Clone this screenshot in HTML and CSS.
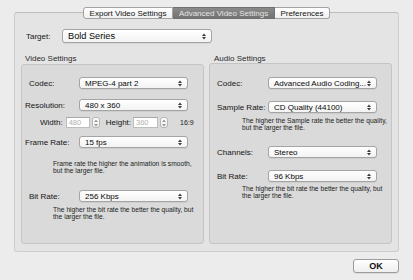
FILE: index.html
```html
<!DOCTYPE html>
<html>
<head>
<meta charset="utf-8">
<link rel="stylesheet" href="styles.css">
</head>
<body>
<div class="window">
  <div class="tabs">
    <div class="tab t1">Export Video Settings</div>
    <div class="tab t2 sel">Advanced Video Settings</div>
    <div class="tab t3">Preferences</div>
  </div>
  <div class="panel">
    <div class="target-row">
      <span class="tlabel">Target:</span>
      <div class="popup big"><span>Bold Series</span><svg class="arr" width="4" height="7" viewBox="0 0 4 7"><polygon points="0,3 2,0.5 4,3"/><polygon points="0,4 2,6.5 4,4"/></svg></div>
    </div>
    <div class="groups">
      <div class="group video">
        <div class="gtitle">Video Settings</div>
        <div class="gbox">
          <div class="row r-codec"><span class="lbl ind">Codec:</span><div class="popup"><span>MPEG-4 part 2</span><svg class="arr" width="4" height="7" viewBox="0 0 4 7"><polygon points="0,3 2,0.5 4,3"/><polygon points="0,4 2,6.5 4,4"/></svg></div></div>
          <div class="row r-res"><span class="lbl">Resolution:</span><div class="popup"><span>480 x 360</span><svg class="arr" width="4" height="7" viewBox="0 0 4 7"><polygon points="0,3 2,0.5 4,3"/><polygon points="0,4 2,6.5 4,4"/></svg></div></div>
          <div class="size-row">
            <span class="slbl wl">Width:</span>
            <div class="field fw">480</div>
            <div class="stepper"><svg width="4" height="8" viewBox="0 0 4 8"><polygon points="0,3 2,0.5 4,3"/><polygon points="0,5 2,7.5 4,5"/></svg></div>
            <span class="slbl hl">Height:</span>
            <div class="field fh">360</div>
            <div class="stepper"><svg width="4" height="8" viewBox="0 0 4 8"><polygon points="0,3 2,0.5 4,3"/><polygon points="0,5 2,7.5 4,5"/></svg></div>
            <span class="ratio">16:9</span>
          </div>
          <div class="row r-fr"><span class="lbl">Frame Rate:</span><div class="popup"><span>15 fps</span><svg class="arr" width="4" height="7" viewBox="0 0 4 7"><polygon points="0,3 2,0.5 4,3"/><polygon points="0,4 2,6.5 4,4"/></svg></div></div>
          <p class="help h-fr">Frame rate the higher the animation is smooth,<br>but the larger file.</p>
          <div class="row r-vbr"><span class="lbl ind">Bit Rate:</span><div class="popup"><span>256 Kbps</span><svg class="arr" width="4" height="7" viewBox="0 0 4 7"><polygon points="0,3 2,0.5 4,3"/><polygon points="0,4 2,6.5 4,4"/></svg></div></div>
          <p class="help h-vbr">The higher the bit rate the better the quality, but<br>the larger the file.</p>
        </div>
      </div>
      <div class="group audio">
        <div class="gtitle">Audio Settings</div>
        <div class="gbox">
          <div class="row r-acodec"><span class="lbl">Codec:</span><div class="popup"><span>Advanced Audio Coding...</span><svg class="arr" width="4" height="7" viewBox="0 0 4 7"><polygon points="0,3 2,0.5 4,3"/><polygon points="0,4 2,6.5 4,4"/></svg></div></div>
          <div class="row r-sr"><span class="lbl">Sample Rate:</span><div class="popup"><span>CD Quality (44100)</span><svg class="arr" width="4" height="7" viewBox="0 0 4 7"><polygon points="0,3 2,0.5 4,3"/><polygon points="0,4 2,6.5 4,4"/></svg></div></div>
          <p class="help h-sr">The higher the Sample rate the better the quality,<br>but the larger the file.</p>
          <div class="row r-ch"><span class="lbl">Channels:</span><div class="popup"><span>Stereo</span><svg class="arr" width="4" height="7" viewBox="0 0 4 7"><polygon points="0,3 2,0.5 4,3"/><polygon points="0,4 2,6.5 4,4"/></svg></div></div>
          <div class="row r-abr"><span class="lbl">Bit Rate:</span><div class="popup"><span>96 Kbps</span><svg class="arr" width="4" height="7" viewBox="0 0 4 7"><polygon points="0,3 2,0.5 4,3"/><polygon points="0,4 2,6.5 4,4"/></svg></div></div>
          <p class="help h-abr">The higher the bit rate the better the quality, but<br>the larger the file.</p>
        </div>
      </div>
    </div>
  </div>
  <div class="footer">
    <div class="okbtn">OK</div>
  </div>
</div>
</body>
</html>
```

FILE: styles.css
```css
* { box-sizing: border-box; }
html, body { margin: 0; padding: 0; }
body {
  width: 413px;
  height: 280px;
  overflow: hidden;
  background: #ececec;
  font-family: "Liberation Sans", Arial, sans-serif;
  font-size: 8px;
  color: #141414;
}
.window { display: flex; flex-direction: column; }

.tabs {
  display: flex;
  justify-content: center;
  height: 12px;
  margin: 7px 0 -7px 0;
  position: relative;
  z-index: 1;
}
.tab {
  height: 12px;
  display: flex;
  align-items: center;
  justify-content: center;
  font-size: 8px;
  color: #111;
  background: linear-gradient(#ffffff, #f0f0f0);
  border: 1px solid #a2a2a2;
  border-left: none;
}
.t1 { width: 90px; border-left: 1px solid #a2a2a2; border-radius: 3px 0 0 3px; }
.t2 { width: 102px; }
.t3 { width: 55px; border-radius: 0 3px 3px 0; }
.tab.sel {
  background: linear-gradient(#8a8a8a, #727272);
  color: #e6e6e6;
  border-color: #707070;
}

.panel {
  margin: 0 14px;
  height: 240px;
  background: #e4e4e4;
  border: 1px solid #cdcdcd;
  border-top-color: #bcbcbc;
  border-radius: 3px;
  padding: 0 6px 7px;
  display: flex;
  flex-direction: column;
}
.target-row {
  display: flex;
  align-items: center;
  margin: 16px 0 0 5px;
  height: 14px;
}
.tlabel { width: 36px; font-size: 8px; }

.popup {
  display: flex;
  align-items: center;
  justify-content: space-between;
  height: 12px;
  width: 109px;
  border: 1px solid #a4a4a4;
  border-radius: 3px;
  background: linear-gradient(#ffffff, #f3f3f3);
  box-shadow: 0 1px 0 rgba(0,0,0,0.06);
  padding: 0 5px 0 5px;
  font-size: 8px;
  color: #0a0a0a;
  white-space: nowrap;
}
.popup.big {
  width: 150px;
  height: 14px;
  font-size: 9.2px;
  padding: 0 5px 0 5px;
}
.arr { fill: #3a3a3a; flex: none; }

.groups {
  display: flex;
  gap: 5px;
  margin-top: 11px;
}
.group { width: 183px; display: flex; flex-direction: column; }
.gtitle {
  height: 10px;
  line-height: 10px;
  padding-left: 4px;
  font-size: 8px;
  color: #2a2a2a;
}
.audio .gtitle { padding-left: 5px; height: 9px; line-height: 9px; }
.gbox {
  height: 180px;
  background: #dadada;
  border: 1px solid #c5c5c5;
  border-radius: 3px;
  display: flex;
  flex-direction: column;
}
.audio .gbox { height: 181px; }
.video .gbox { padding-left: 3px; }
.audio .gbox { padding-left: 7px; }

.row { display: flex; align-items: center; height: 12px; }
.lbl { font-size: 8px; color: #141414; white-space: nowrap; }
.video .lbl { width: 54px; }
.video .lbl.ind { padding-left: 4px; }
.audio .lbl { width: 51px; }

.r-codec { margin-top: 12px; }
.r-res { margin-top: 10px; }
.size-row {
  display: flex;
  align-items: center;
  height: 11px;
  margin-top: 6px;
}
.slbl { font-size: 8px; color: #141414; }
.wl { margin-left: 15px; }
.hl { margin-left: 6px; }
.field {
  height: 11px;
  background: #fff;
  border: 1px solid #bdbdbd;
  border-top-color: #a9a9a9;
  color: #b0b0b0;
  font-size: 7.5px;
  display: flex;
  align-items: center;
  padding-left: 2px;
}
.fw { width: 24px; margin-left: 3px; }
.fh { width: 25px; margin-left: 2px; }
.stepper {
  width: 8px;
  height: 11px;
  margin-left: 2px;
  border: 1px solid #b5b5b5;
  border-radius: 3px;
  background: linear-gradient(#ffffff, #f0f0f0);
  display: flex;
  align-items: center;
  justify-content: center;
}
.stepper svg { fill: #999; }
.ratio { margin-left: 12px; font-size: 7px; color: #222; }
.r-fr { margin-top: 8px; }
.help {
  margin: 0;
  font-size: 6.7px;
  line-height: 7px;
  color: #222;
  white-space: nowrap;
}
.video .help { padding-left: 28px; }
.audio .help { padding-left: 25px; }
.h-fr { margin-top: 12px; }
.r-vbr { margin-top: 16px; }
.h-vbr { margin-top: 4px; }

.r-acodec { margin-top: 13px; }
.r-sr { margin-top: 12px; }
.h-sr { margin-top: 4px; }
.r-ch { margin-top: 15px; }
.r-abr { margin-top: 12px; }
.h-abr { margin-top: 3px; }

.footer {
  display: flex;
  justify-content: flex-end;
  margin: 7px 14px 0 0;
}
.okbtn {
  width: 46px;
  height: 14px;
  border: 1px solid #9c9c9c;
  border-radius: 3px;
  background: linear-gradient(#ffffff, #eeeeee);
  box-shadow: 0 1px 0 rgba(0,0,0,0.08);
  display: flex;
  align-items: center;
  justify-content: center;
  font-size: 9px;
  font-weight: bold;
  color: #111;
}
```
